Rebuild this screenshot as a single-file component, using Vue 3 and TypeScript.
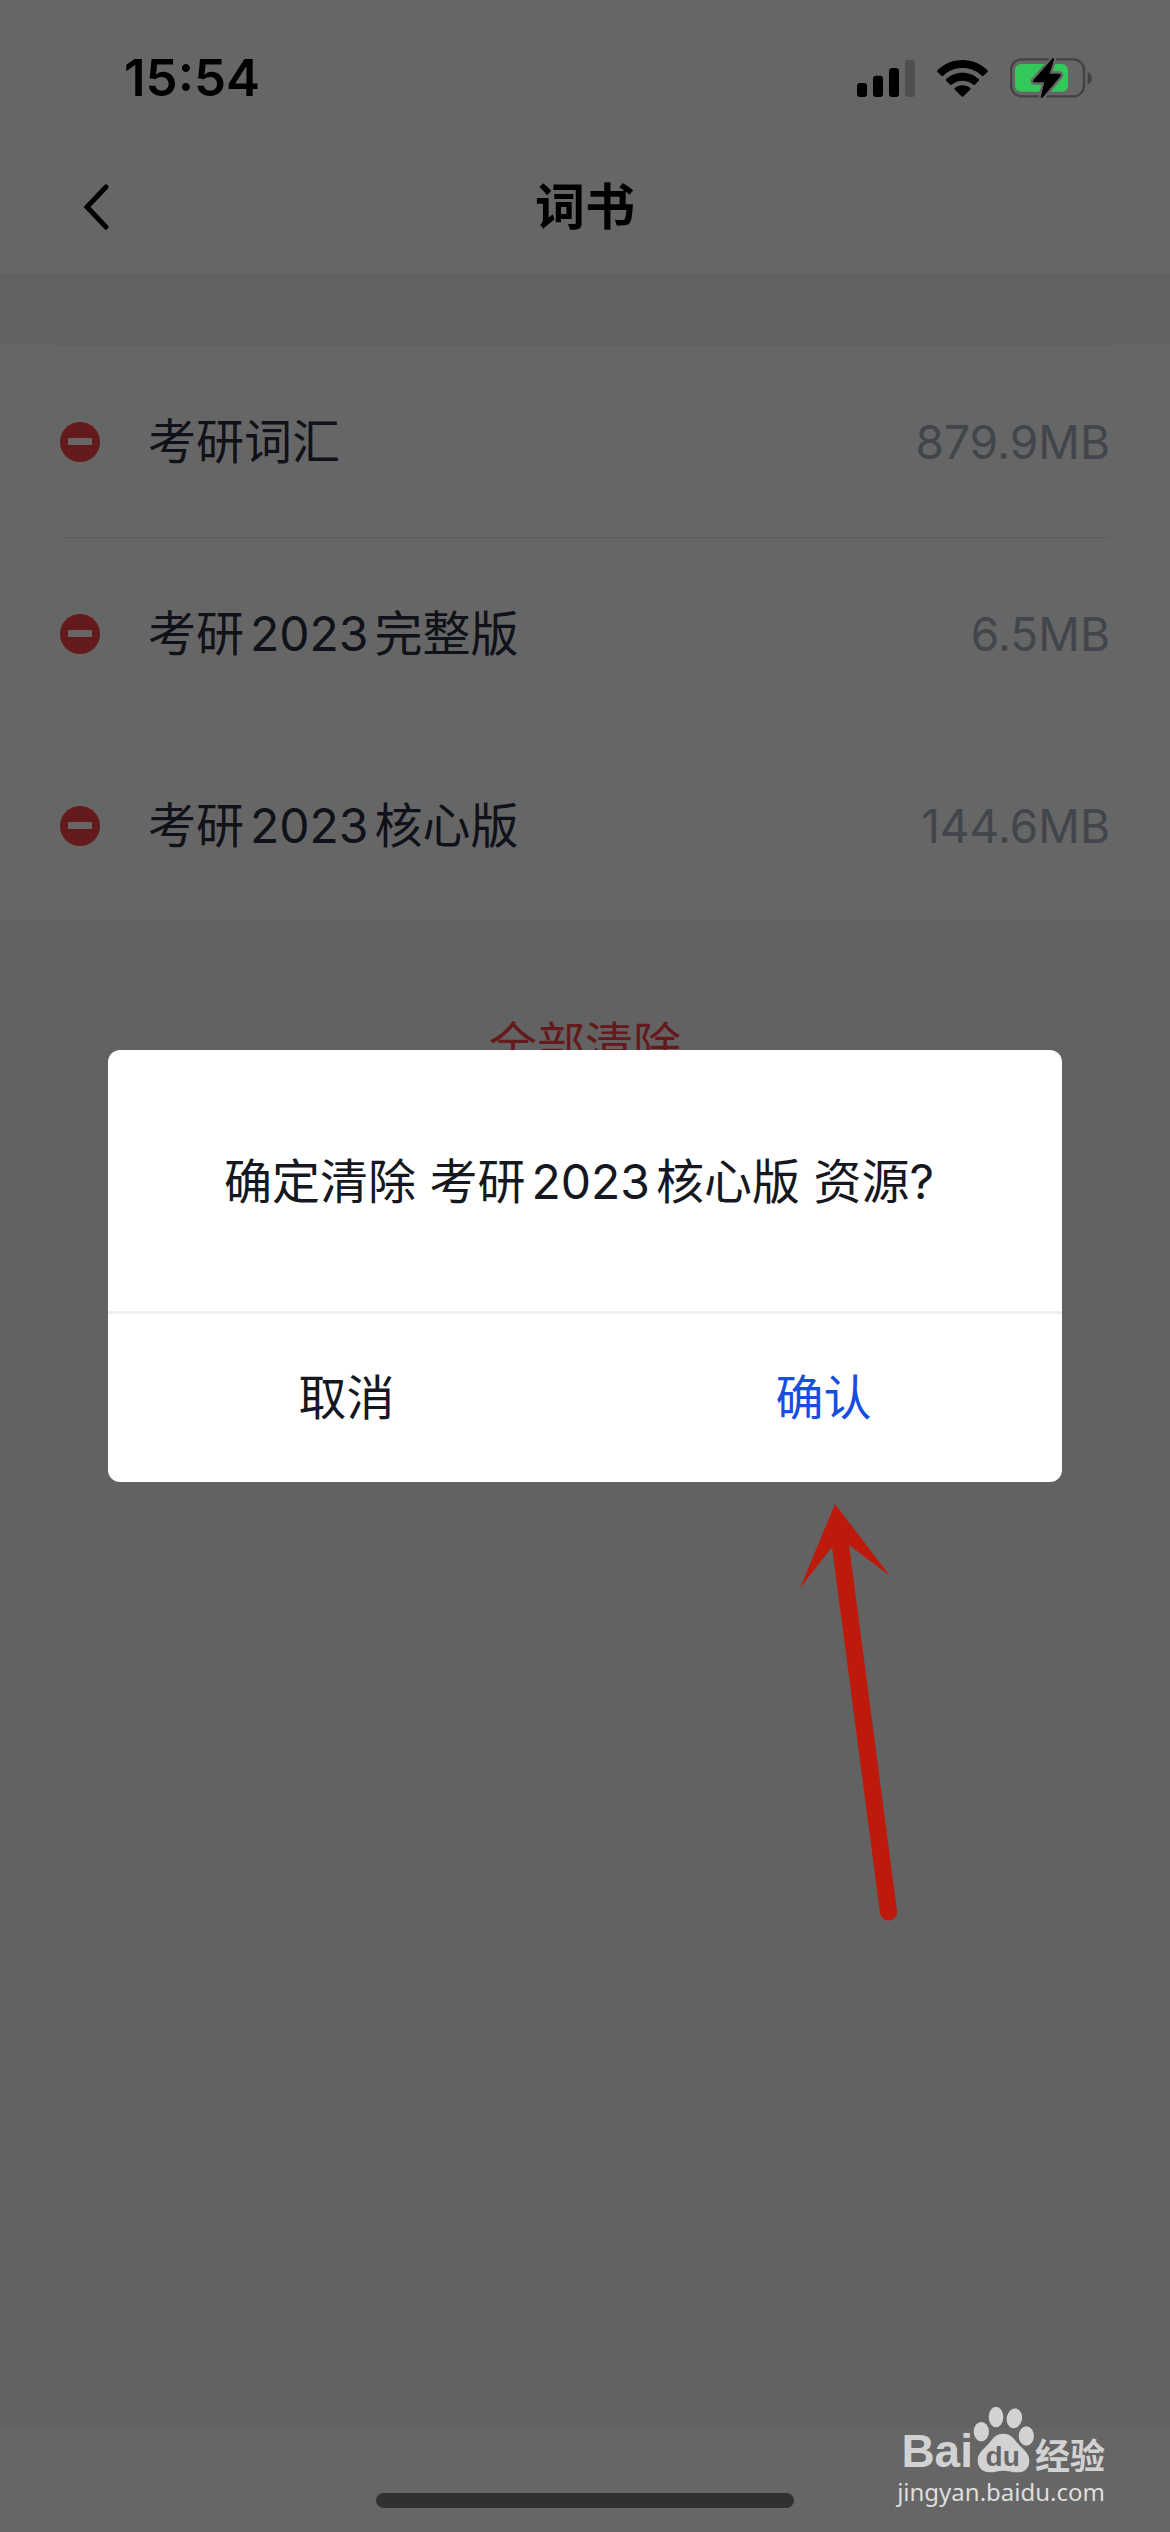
<script setup lang="ts">
import { ref } from 'vue'

interface Book {
  name: string
  size: string
}

const books: Book[] = [
  { name: '考研词汇', size: '879.9MB' },
  { name: '考研2023完整版', size: '6.5MB' },
  { name: '考研2023核心版', size: '144.6MB' },
]

const selected = ref<Book>(books[2])
const dialogOpen = ref(true)

function askRemove(book: Book) {
  selected.value = book
  dialogOpen.value = true
}

function closeDialog() {
  dialogOpen.value = false
}
</script>

<template>
  <div class="screen">
    <div class="status-bar">
      <span class="time">15:54</span>
      <div class="status-icons">
        <svg width="58" height="37" viewBox="0 0 174 111" aria-hidden="true">
          <rect x="0" y="69" width="30" height="42" rx="9" />
          <rect x="48" y="47" width="30" height="64" rx="9" />
          <rect x="96" y="24" width="30" height="87" rx="9" />
          <rect x="144" y="0" width="30" height="111" rx="9" fill="#505050" />
        </svg>
        <svg width="51" height="37" viewBox="0 0 152 111" aria-hidden="true">
          <path d="M76 0 C106 0 132 12 151 31 Q153 34 151 36 L139 47 Q137 49 134 47 C118 32 98 24 76 24 C54 24 34 32 18 47 Q15 49 13 47 L1 36 Q-1 34 1 31 C20 12 46 0 76 0 Z" />
          <path d="M76 38 C95 38 112 45 125 57 Q127 60 125 62 L113 74 Q111 76 108 74 C99 66 88 62 76 62 C64 62 53 66 44 74 Q41 76 39 74 L27 62 Q25 60 27 57 C40 45 57 38 76 38 Z" />
          <path d="M76 76 C85 76 93 79 99 84 Q101 87 99 89 L79 109 Q76 112 73 109 L53 89 Q51 87 53 84 C59 79 67 76 76 76 Z" />
        </svg>
        <svg width="82" height="42" viewBox="0 0 246 126" aria-hidden="true">
          <rect x="3" y="7" width="219" height="111" rx="32" fill="none" stroke="#444246" stroke-width="7" />
          <path d="M233 45 C250 51 250 76 233 82 Z" fill="#444246" />
          <rect x="15" y="21" width="159" height="83" rx="18" fill="#34c759" />
          <path d="M128 4 L70 70 Q67 76 74 76 L103 76 L92 121 Q94 125 99 121 L152 57 Q154 50 148 50 L119 50 L132 8 Q131 1 128 4 Z" fill="#000" stroke="#666" stroke-width="14" paint-order="stroke" stroke-linejoin="round" />
        </svg>
      </div>
    </div>

    <header class="nav">
      <button class="back" type="button" aria-label="返回">
        <svg width="29" height="48" viewBox="0 0 29 48" aria-hidden="true">
          <path d="M25 4 L6 24 L25 44" fill="none" stroke="#000" stroke-width="5" stroke-linecap="round" />
        </svg>
      </button>
      <h1>词书</h1>
    </header>

    <main class="content">
      <ul class="books">
        <li v-for="book in books" :key="book.name" class="book">
          <button class="remove" type="button" :aria-label="'清除 ' + book.name" @click="askRemove(book)">
            <span class="minus"></span>
          </button>
          <span class="name">{{ book.name }}</span>
          <span class="size">{{ book.size }}</span>
        </li>
      </ul>
      <button class="clear-all" type="button">全部清除</button>
    </main>

    <footer class="home-area">
      <div class="home-indicator"></div>
    </footer>

    <div v-if="dialogOpen" class="overlay">
      <div class="dialog" role="dialog" aria-modal="true" aria-labelledby="dialog-message">
        <p id="dialog-message" class="message">确定清除 {{ selected.name }} 资源?</p>
        <div class="actions">
          <button type="button" @click="closeDialog">取消</button>
          <button type="button" class="confirm" @click="closeDialog">确认</button>
        </div>
      </div>
    </div>

    <svg class="arrow" width="100" height="424" viewBox="0 0 100 424" aria-hidden="true">
      <path d="M35 4 L90 76 L49 45 L97 411 A8 8 0 0 1 80 413 L32 47 L0 88 Z" fill="#bd1a0b" />
    </svg>

    <div class="watermark">
      <div class="brand">
        <span class="bai">Bai</span>
        <svg width="62" height="68" viewBox="325 80 186 204" aria-hidden="true">
          <g fill="#d2d2d2">
            <ellipse cx="350" cy="157" rx="23" ry="29" />
            <ellipse cx="394" cy="113" rx="22" ry="31" />
            <ellipse cx="449" cy="117" rx="23" ry="30" transform="rotate(10 449 117)" />
            <ellipse cx="485" cy="170" rx="23" ry="29" />
            <path d="M416 163 C438 163 448 178 459 192 C472 208 494 220 494 244 C494 266 480 279 458 279 C442 279 432 274 416 274 C400 274 392 279 376 279 C353 279 339 265 339 243 C339 220 360 208 373 192 C384 178 394 163 416 163 Z" />
          </g>
          <text x="414" y="261" text-anchor="middle" class="du">du</text>
        </svg>
        <span class="jingyan">经验</span>
      </div>
      <span class="site">jingyan.baidu.com</span>
    </div>
  </div>
</template>

<style>
body {
  margin: 0;
  background: #f5f5f5;
}
</style>

<style scoped>
.screen {
  position: relative;
  display: flex;
  flex-direction: column;
  min-height: 100vh;
  background: #fff;
  color: #2a2d40;
  font-family: Inter, "Noto Sans CJK SC", sans-serif;
  font-size: 48px;
  line-height: 64px;
  text-autospace: normal;
}

button {
  margin: 0;
  padding: 0;
  border: 0;
  background: none;
  color: inherit;
  font: inherit;
  cursor: pointer;
}

.status-bar {
  position: relative;
  z-index: 2;
  box-sizing: border-box;
  display: flex;
  align-items: center;
  justify-content: space-between;
  height: 140px;
  padding: 16px 78px 0 124px;
}

.time {
  color: #000;
  font-size: 51px;
  font-weight: 600;
}

.status-icons {
  display: flex;
  align-items: center;
  gap: 22px;
}

.nav {
  display: grid;
  grid-template-columns: 120px 1fr 120px;
  align-items: center;
  height: 134px;
}

.back {
  display: flex;
  justify-content: flex-end;
  padding-right: 10px;
}

h1 {
  margin: 0;
  color: #000;
  font-size: 50px;
  font-weight: 600;
  text-align: center;
}

.content {
  flex: 1;
  padding-top: 71px;
  background: #f5f5f5;
}

.books {
  margin: 0;
  padding: 0 60px;
  list-style: none;
  background: #fff;
}

.book {
  box-sizing: border-box;
  display: flex;
  align-items: center;
  height: 192px;
  border-top: 1px solid #e6e6e6;
}

.book:last-child {
  border-top-color: transparent;
}

.remove {
  display: flex;
  align-items: center;
  justify-content: center;
  width: 40px;
  height: 40px;
  margin-right: 48px;
  border-radius: 50%;
  background: #fa4046;
}

.minus {
  width: 24px;
  height: 7px;
  background: #fff;
}

.name {
  flex: 1;
}

.size {
  color: #a6aebb;
  font-size: 46px;
}

.clear-all {
  display: block;
  margin: 92px auto 0;
  color: #fa4046;
}

.home-area {
  box-sizing: border-box;
  display: flex;
  align-items: flex-end;
  justify-content: center;
  height: 104px;
  padding-bottom: 24px;
}

.home-indicator {
  position: relative;
  z-index: 2;
  width: 418px;
  height: 15px;
  border-radius: 8px;
  background: #313131;
}

.overlay {
  position: absolute;
  inset: 0;
  z-index: 1;
  display: flex;
  align-items: center;
  justify-content: center;
  padding: 0 108px;
  background: rgba(0, 0, 0, 0.6);
}

.dialog {
  flex: 1;
  border-radius: 12px;
  background: #fff;
  color: #151820;
}

.message {
  margin: 0;
  padding: 100px 52px 97px 40px;
  text-align: center;
}

.actions {
  display: grid;
  grid-template-columns: 1fr 1fr;
  border-top: 3px solid #efefef;
}

.actions button {
  height: 168px;
}

.actions .confirm {
  color: #174ee0;
}

.arrow {
  position: absolute;
  z-index: 3;
  top: 1500px;
  left: 800px;
}

.watermark {
  position: absolute;
  z-index: 3;
  right: 65px;
  bottom: 22px;
  display: flex;
  flex-direction: column;
  align-items: flex-end;
  color: #d2d2d2;
}

.brand {
  display: flex;
  align-items: flex-end;
}

.bai {
  font: 700 46px/46px "Liberation Sans", sans-serif;
}

.du {
  fill: #666;
  font: 700 84px "Liberation Sans", sans-serif;
}

.jingyan {
  font-size: 35px;
  font-weight: 700;
  line-height: 36px;
}

.site {
  color: #dedede;
  font: 400 24px/36px "Noto Sans", sans-serif;
}
</style>
